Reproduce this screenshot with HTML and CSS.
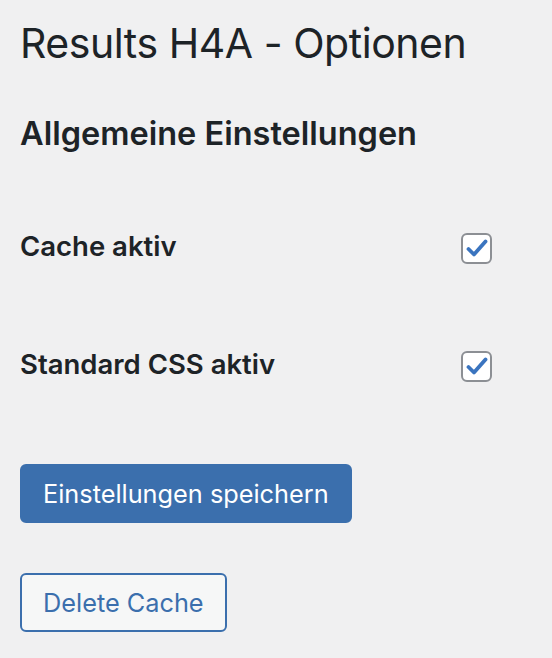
FILE: index.html
```html
<!DOCTYPE html>
<html lang="de">
<head>
<meta charset="utf-8">
<title>Results H4A - Optionen</title>
<link rel="stylesheet" href="styles.css">
</head>
<body>
<div class="wrap">
  <h1 class="title">Results H4A - Optionen</h1>
  <h2 class="section">Allgemeine Einstellungen</h2>
  <div class="rows">
    <div class="row">
      <span class="label">Cache aktiv</span>
      <span class="check"><svg viewBox="0 0 22 21" width="22" height="21"><path d="M2.5 11 L8 16.5 L19.5 3.5" fill="none" stroke="#3a74bf" stroke-width="3.8" stroke-linecap="round" stroke-linejoin="round"/></svg></span>
    </div>
    <div class="row">
      <span class="label">Standard CSS aktiv</span>
      <span class="check"><svg viewBox="0 0 22 21" width="22" height="21"><path d="M2.5 11 L8 16.5 L19.5 3.5" fill="none" stroke="#3a74bf" stroke-width="3.8" stroke-linecap="round" stroke-linejoin="round"/></svg></span>
    </div>
  </div>
  <div class="actions">
    <button class="btn btn-primary">Einstellungen speichern</button>
    <button class="btn btn-secondary">Delete Cache</button>
  </div>
</div>
</body>
</html>
```
FILE: styles.css
```css
html, body {
  margin: 0;
  padding: 0;
  background: #f0f0f1;
}
body {
  font-family: Inter, "Noto Sans", sans-serif;
  color: #1d2327;
}
.wrap {
  padding: 14px 20px 0 20px;
  display: flex;
  flex-direction: column;
}
.title {
  margin: 0;
  font-size: 41px;
  font-weight: 400;
  line-height: 58px;
  letter-spacing: -0.45px;
}
.section {
  margin: 42px 0 0 0;
  font-size: 32.5px;
  font-weight: 600;
  line-height: 40px;
}
.rows {
  display: flex;
  flex-direction: column;
  margin-top: 79px;
  gap: 87px;
}
.row {
  display: flex;
  align-items: flex-start;
  justify-content: space-between;
  width: 472px;
  height: 31px;
}
.label {
  font-size: 27.5px;
  font-weight: 600;
  line-height: 31px;
  margin-top: -2px;
}
.check {
  width: 27px;
  height: 27px;
  border: 2px solid #8c8f94;
  border-radius: 6px;
  background: #fff;
  display: flex;
  align-items: center;
  justify-content: center;
}
.actions {
  display: flex;
  flex-direction: column;
  align-items: flex-start;
  margin-top: 82px;
  gap: 50px;
}
.btn {
  font-family: Inter, "Noto Sans", sans-serif;
  font-size: 25.3px;
  height: 59px;
  padding: 0 21px;
  border-radius: 6px;
  cursor: pointer;
}
.btn-primary {
  background: #3b6fad;
  border: 2px solid #3b6fad;
  color: #fff;
}
.btn-secondary {
  background: #f6f7f7;
  border: 2px solid #3b6fad;
  color: #3b6fad;
}
```
